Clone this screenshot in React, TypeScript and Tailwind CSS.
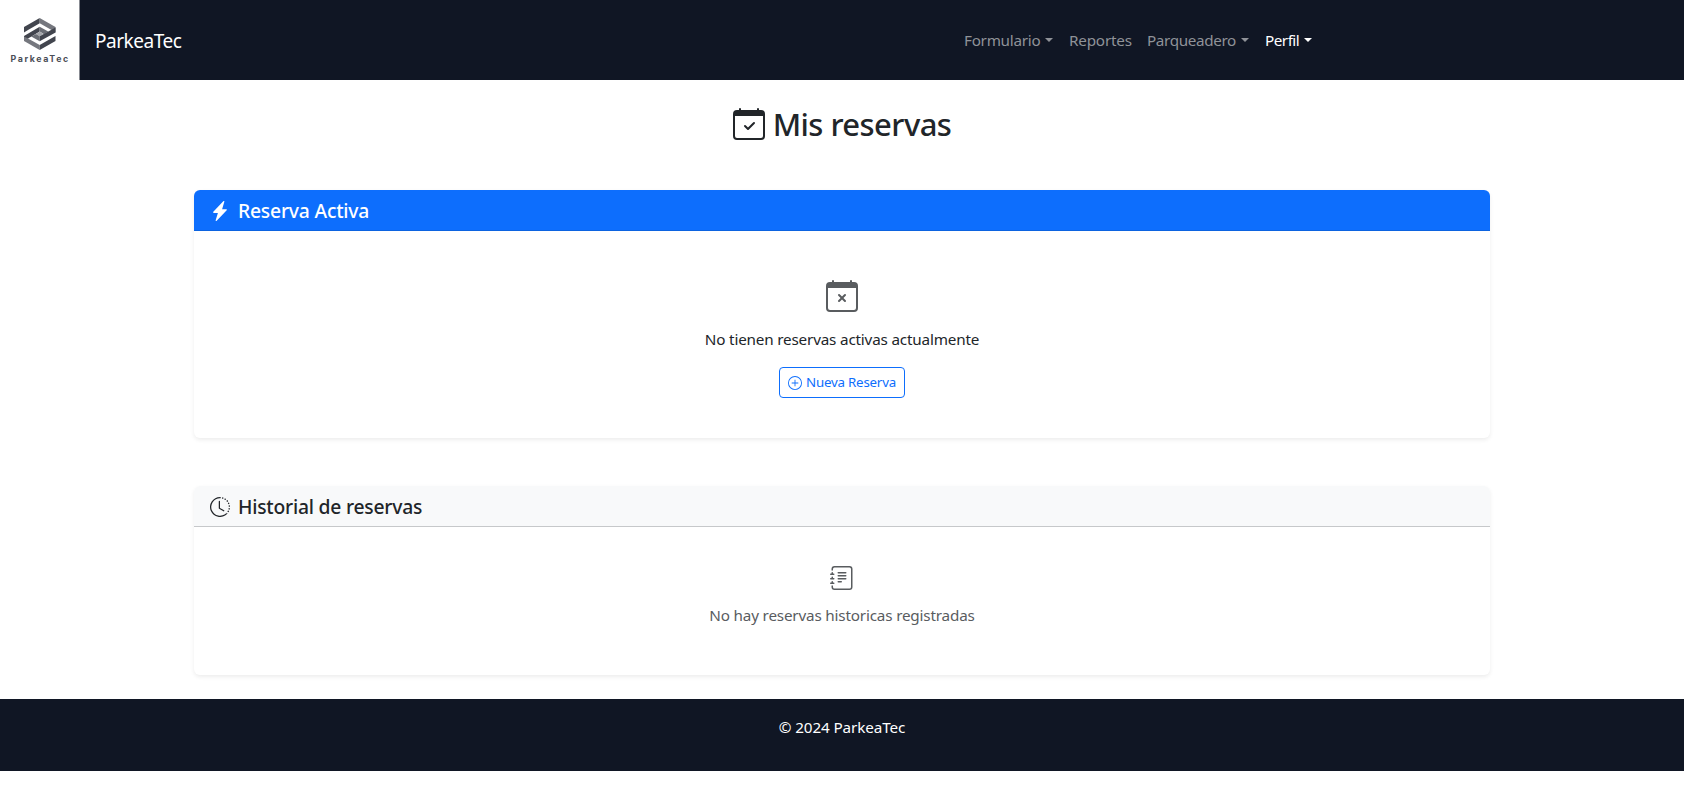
import {
  BsCalendarCheck,
  BsCalendarX,
  BsClockHistory,
  BsJournalText,
  BsLightningChargeFill,
  BsPlusCircle,
} from "react-icons/bs";

function Logo() {
  return (
    <svg className="h-20 w-20 shrink-0" viewBox="0 0 80 80" role="img" aria-label="ParkeaTec">
      <rect width="79.5" height="80" fill="#fff" />
      <path d="M24 27 39.7 18V23.2L28 30 24 32.5Z" fill="#42454e" />
      <path d="M39.7 18 55.5 27V32.5L51.5 30 39.7 23.2Z" fill="#75777e" />
      <path d="M24 36 39.7 26.8V31.6L31.5 36.5 28 38.5 24 41Z" fill="#42454e" />
      <path d="M39.7 26.8 48.2 31.6 44 34.2 39.7 31.6Z" fill="#6b6e75" />
      <path d="M39.7 31.6 43.4 33.9 39.7 36.3 36 33.9Z" fill="#a5a7ab" />
      <path d="M36 33.9 39.7 36.3V41.2L31.2 36.6Z" fill="#6b6e75" />
      <path d="M39.7 36.3 55.5 27.5V32.5L39.7 41.2Z" fill="#42454e" />
      <path d="M24 36.5 28 38.5 39.7 45V50L24 41Z" fill="#75777e" />
      <path d="M55.5 36 51.5 38.3 39.7 45V50L55.5 41Z" fill="#42454e" />
      <text x="10.5" y="62" textLength="57.5" fontSize="8.8" fontWeight="700" fontFamily="Inter, sans-serif" fill="#4b4e57">
        ParkeaTec
      </text>
    </svg>
  );
}

function Caret() {
  return <span className="ml-[5px] inline-block border-x-[4.8px] border-t-[4.8px] border-x-transparent border-t-current align-[4px]" />;
}

export default function App() {
  return (
    <div className="min-h-screen bg-white font-['Noto_Sans','Open_Sans',sans-serif] text-[15.25px] tracking-[-0.18px] text-[#212529]">
      <nav className="flex h-20 items-center bg-[#101624]">
        <Logo />
        <a className="ml-[15px] w-[869px] pt-0.5 text-[19px] leading-[30px] tracking-[-0.47px] text-white">ParkeaTec</a>
        <ul className="flex pb-px leading-6 whitespace-nowrap text-[#8f9298]">
          <li className="w-[105px] tracking-[-0.27px]">Formulario<Caret /></li>
          <li className="w-[78px] tracking-[-0.2px]">Reportes</li>
          <li className="w-[118px] tracking-[-0.36px]">Parqueadero<Caret /></li>
          <li className="tracking-[-0.5px] text-white">Perfil<Caret /></li>
        </ul>
      </nav>

      <main className="mx-auto w-[1296px]">
        <h2 className="flex h-[110px] items-start justify-center gap-2 pt-[25px] text-[31px] font-medium leading-[38px] tracking-[-0.55px]">
          <BsCalendarCheck className="mt-[3px] size-8" />
          <span>Mis reservas</span>
        </h2>

        <section className="h-[248px] rounded-md shadow-[0_2px_4px_rgba(0,0,0,0.075)]">
          <header className="flex h-[41px] items-center gap-2 rounded-t-md border-b border-[#0c63e0] bg-[#0d6efd] px-4 pt-0.5 text-[19.3px] font-medium tracking-[-0.2px] text-white">
            <BsLightningChargeFill className="size-5" />
            <h5>Reserva Activa</h5>
          </header>
          <div className="flex flex-col items-center pt-[49px]">
            <BsCalendarX className="size-8 text-[#595c5f]" />
            <p className="mt-[15px] leading-6">No tienen reservas activas actualmente</p>
            <button className="mt-4 flex h-[31px] w-[126px] items-center justify-center gap-1 whitespace-nowrap rounded border border-[#0d6efd] text-[13.3px] tracking-[-0.2px] text-[#0d6efd]">
              <BsPlusCircle className="size-3.5" />
              <span>Nueva Reserva</span>
            </button>
          </div>
        </section>

        <section className="mt-12 h-[189px] rounded-md shadow-[0_2px_4px_rgba(0,0,0,0.075)]">
          <header className="flex h-[41px] items-center gap-2 rounded-t-md border-b border-[#c6c8ca] bg-[#f8f9fa] px-4 pt-0.5 text-[19.3px] font-medium tracking-[-0.22px]">
            <BsClockHistory className="size-5" />
            <h5>Historial de reservas</h5>
          </header>
          <div className="flex flex-col items-center pt-[39px] text-[#595c5f]">
            <BsJournalText className="size-6" />
            <p className="mt-[13px] leading-6">No hay reservas historicas registradas</p>
          </div>
        </section>
      </main>

      <footer className="mt-6 h-[72px] bg-[#101624] pt-4 text-center leading-6 tracking-[-0.1px] text-white">
        <p>© 2024 ParkeaTec</p>
      </footer>
    </div>
  );
}
